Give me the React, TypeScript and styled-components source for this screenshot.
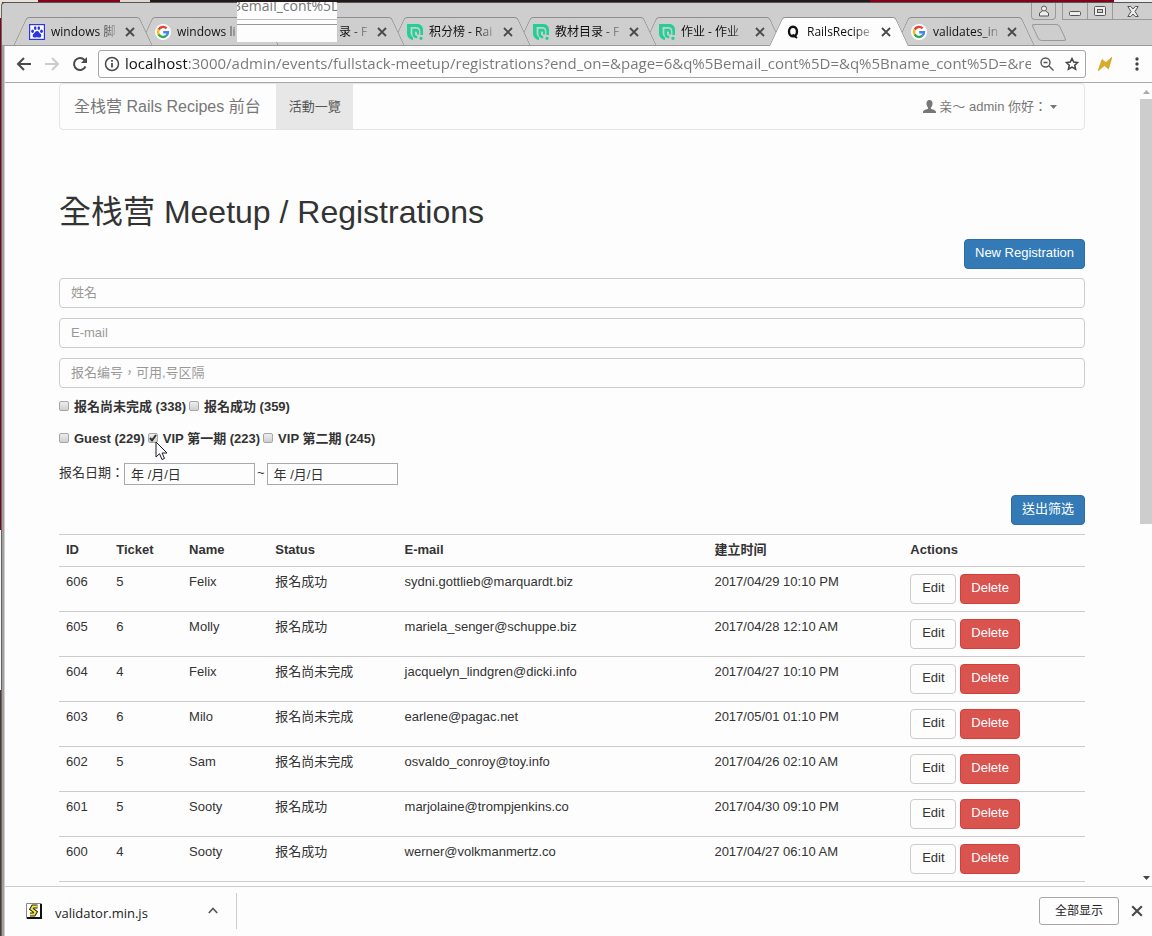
import React from "react";
import styled, { createGlobalStyle, css } from "styled-components";

const pageFont = `"Liberation Sans", "Noto Sans CJK TC", sans-serif`;
const chromeFont = `"Open Sans", "Noto Sans CJK SC", sans-serif`;

const GlobalStyle = createGlobalStyle`
  *, *::before, *::after { box-sizing: border-box; }
  body { margin: 0; background: #85001a; font: 13px/18px ${pageFont}; color: #333; }
  button, input { font: inherit; color: inherit; margin: 0; }
  button { cursor: pointer; }
`;

const Desktop = styled.div`
  height: 100vh;
  padding: 2px 0 0 1px;
  background:
    linear-gradient(90deg, #e8e2da 0 38px, #85001a 38px 120px, #e0d8d0 120px 150px, #221a18 150px 870px, #85001a 870px 1114px, #eee 1114px) top / 100% 2px no-repeat,
    linear-gradient(#e8e2da 0 18px, #85001a 18px 530px, #f4f0ea 530px 690px, #4a3a36 690px) left / 2px 100% no-repeat;
`;

const Window = styled.div`
  position: relative;
  height: 100%;
  display: flex;
  flex-direction: column;
  border-top: 1px solid #555;
  border-left: 1px solid #666;
  border-top-left-radius: 4px;
  background: linear-gradient(90deg, #a0a0a0 2px, #cecece 2px);
`;

const TabStrip = styled.div`
  display: grid;
  height: 43px;
  flex: none;
  padding-left: 11px;
  border-bottom: 1px solid #999;
  border-top-left-radius: 4px;
  background: #cecece;
`;

const Tabs = styled.div`
  grid-area: 1 / 1;
  display: flex;
  align-items: flex-end;
  isolation: isolate;
`;

const TabBox = styled.div<{ $active?: boolean; $order: number }>`
  position: relative;
  z-index: ${(p) => (p.$active ? 20 : p.$order)};
  display: flex;
  align-items: center;
  flex: none;
  width: 140px;
  height: 29px;
  margin: 0 -14px -1px 0;
  padding: 0 15px 0 16px;
  font: 12px/18px ${chromeFont};
  color: #111;

  &::before,
  &::after {
    content: "";
    position: absolute;
    z-index: -1;
    top: 0;
    bottom: 0;
    width: 50%;
    background: ${(p) => (p.$active ? "#fdfdfd" : "#cecece")};
    border: 0 solid #8f8f8f;
    border-top-width: 1px;
    border-bottom: ${(p) => (p.$active ? "0" : "1px solid #999")};
  }
  &::before {
    left: 0;
    border-left-width: 1px;
    border-top-left-radius: 3px;
    transform: skewX(-25deg);
    transform-origin: bottom left;
  }
  &::after {
    right: 0;
    border-right-width: 1px;
    border-top-right-radius: 3px;
    transform: skewX(25deg);
    transform-origin: bottom right;
  }
`;

const TabTitle = styled.span`
  flex: 1;
  min-width: 0;
  overflow: hidden;
  white-space: nowrap;
  margin: 0 4px 0 6px;
  mask-image: linear-gradient(90deg, #000 70%, rgba(0, 0, 0, 0.15) 100%);
`;

const IconButton = styled.button<{ $w?: number }>`
  display: flex;
  align-items: center;
  justify-content: center;
  flex: none;
  width: ${(p) => p.$w ?? 16}px;
  height: 16px;
  padding: 0;
  border: 0;
  background: none;
`;

const NewTab = styled.button`
  flex: none;
  width: 28px;
  height: 17px;
  margin: 0 0 4px 14px;
  padding: 0;
  border: 1px solid #999;
  border-radius: 3px;
  background: #cecece;
  transform: skewX(25deg);
`;

const WindowButtons = styled.div`
  grid-area: 1 / 1;
  justify-self: end;
  display: flex;
  height: 17px;
`;

const WindowButton = styled.button<{ $w: number; $gap?: boolean }>`
  display: flex;
  align-items: center;
  justify-content: center;
  width: ${(p) => p.$w}px;
  padding: 0;
  border: 1px solid #999;
  border-top: 0;
  border-right-width: ${(p) => (p.$gap ? 1 : 0)}px;
  margin-right: ${(p) => (p.$gap ? 6 : 0)}px;
  border-radius: ${(p) => (p.$gap ? "0 0 4px 4px" : "0")};
  background: #cecece;
`;

const chromeSurface = css`
  margin-left: 3px;
  background: #fdfdfd;
`;

const Toolbar = styled.div`
  ${chromeSurface}
  display: flex;
  align-items: center;
  flex: none;
  height: 37px;
  padding: 0 1px 0 5px;
  border-bottom: 1px solid #aaa;
`;

const NavButton = styled(IconButton)`
  width: 28px;
  height: 28px;
`;

const AddressBar = styled.div`
  display: flex;
  align-items: center;
  flex: 1;
  min-width: 0;
  height: 28px;
  margin: 0 5px 0 4px;
  padding: 0 0 0 4px;
  border: 1px solid #a6a6a6;
  border-radius: 3px;
`;

const Extensions = styled.div`
  display: flex;
  gap: 4px;
`;

const AddressInput = styled.input`
  flex: 1;
  min-width: 0;
  height: 24px;
  padding: 0 0 2px;
  margin: 0 4px 0 4px;
  border: 0;
  outline: 0;
  font: 15px/22px ${chromeFont};
  background: linear-gradient(90deg, #111 62px, #777 62px);
  background-clip: text;
  -webkit-text-fill-color: transparent;
`;

const Viewport = styled.div`
  ${chromeSurface}
  display: flex;
  flex: 1;
  min-height: 0;
`;

const Page = styled.div`
  flex: 1;
  min-width: 0;
  overflow: hidden;
  padding: 0 16px;
`;

const Container = styled.main`
  max-width: 1026px;
  margin: 0 auto;
`;

const ScrollBar = styled.div`
  display: flex;
  flex-direction: column;
  align-items: center;
  justify-content: space-between;
  width: 13px;
  padding: 7px 0 6px 1px;
`;

const ScrollThumb = styled.div`
  width: 100%;
  height: 425px;
  margin: 5px 0 auto;
  background: #cdcdcd;
`;

const Navbar = styled.nav`
  display: flex;
  align-items: stretch;
  height: 47px;
  border: 1px solid #e3e3e3;
  border-radius: 4px;
  color: #777;
`;

const Brand = styled.a`
  padding: 14px 15px 14px 14px;
  font-size: 16px;
  line-height: 18px;
  color: inherit;
  text-decoration: none;
`;

const NavItem = styled.a<{ $active?: boolean }>`
  display: flex;
  align-items: center;
  padding: 0 12px 0 13px;
  color: ${(p) => (p.$active ? "#555" : "inherit")};
  background: ${(p) => (p.$active ? "#e7e7e7" : "none")};
  text-decoration: none;
`;

const UserMenu = styled.button`
  display: flex;
  align-items: center;
  gap: 3px;
  margin-left: auto;
  padding: 0 27px 0 0;
  border: 0;
  background: none;
`;

const Heading = styled.h1`
  margin: 64px 0 9px;
  font-size: 32px;
  line-height: 36px;
  font-weight: 400;
`;

const ButtonRow = styled.div`
  display: flex;
  justify-content: flex-end;
  margin-bottom: 9px;
`;

const tones = {
  primary: ["#337ab7", "#2e6da4", "#fff"],
  danger: ["#d9534f", "#d43f3a", "#fff"],
  plain: ["#fdfdfd", "#ccc", "#333"],
};

const Button = styled.button<{ $tone: keyof typeof tones }>`
  min-width: 46px;
  height: 30px;
  padding: 0 10px 2px;
  border: 1px solid ${(p) => tones[p.$tone][1]};
  border-radius: 4px;
  background: ${(p) => tones[p.$tone][0]};
  color: ${(p) => tones[p.$tone][2]};
  line-height: 18px;
`;

const TextField = styled.input`
  display: block;
  width: 100%;
  height: 30px;
  margin-bottom: 10px;
  padding: 0 11px 2px;
  border: 1px solid #ccc;
  border-radius: 4px;
  background: #fdfdfd;
  &::placeholder { color: #999; opacity: 1; }
`;

const CheckRow = styled.div`
  display: flex;
  gap: 3px;
  height: 18px;
  margin-bottom: 14px;
`;

const CheckLabel = styled.label`
  display: flex;
  align-items: center;
  gap: 5px;
  font-weight: 700;
`;

const CheckBox = styled.input.attrs({ type: "checkbox" })`
  appearance: none;
  width: 10px;
  height: 10px;
  margin-bottom: 3px;
  border: 1px solid #a5a5a5;
  border-radius: 2px;
  background: linear-gradient(#eee, #cfcfcf);
  &:checked {
    background:
      url("data:image/svg+xml,%3Csvg xmlns='http://www.w3.org/2000/svg' viewBox='0 0 8 8'%3E%3Cpath d='M1 4l2 2.4L7 1' fill='none' stroke='%23333' stroke-width='2'/%3E%3C/svg%3E"),
      linear-gradient(#eee, #cfcfcf);
  }
`;

const DateRow = styled.div`
  display: flex;
  align-items: center;
  height: 24px;
  margin-bottom: 9px;
`;

const DateLabel = styled.label<{ $gap?: boolean }>`
  padding: 0 ${(p) => (p.$gap ? 2 : 0)}px 2px;
`;

const DateInput = styled.input`
  width: 131px;
  height: 22px;
  padding: 0 6px 2px;
  border: 1px solid #a9a9a9;
  background: #fdfdfd;
`;

const Table = styled.table`
  width: 100%;
  table-layout: fixed;
  border-collapse: collapse;
`;

const HeadCell = styled.th<{ $w: number }>`
  width: ${(p) => p.$w}%;
  height: 32px;
  padding: 0 7px 2px;
  border-top: 1px solid #ccc;
  text-align: left;
`;

const Cell = styled.td`
  height: 45px;
  padding: 6px 7px 0;
  border-top: 1px solid #ccc;
  vertical-align: top;
`;

const Actions = styled.div`
  display: flex;
  gap: 4px;
  padding-top: 1px;
`;

const DownloadBar = styled.footer`
  ${chromeSurface}
  display: flex;
  align-items: center;
  flex: none;
  height: 50px;
  padding: 0 7px 2px 21px;
  border-top: 1px solid #ccc;
  font: 13px/18px ${chromeFont};
  color: #222;
`;

const Download = styled.div`
  display: flex;
  align-items: center;
  width: 211px;
  height: 36px;
  padding-right: 15px;
  border-right: 1px solid #ccc;
`;

const FileName = styled.span`
  flex: 1;
  margin: 4px 0 0 13px;
`;

const ShowAll = styled.button`
  width: 80px;
  height: 28px;
  margin: 0 10px 0 auto;
  padding: 0;
  border: 1px solid #a6a6a6;
  border-radius: 3px;
  background: #fdfdfd;
  font-size: 12px;
`;

const DragGhost = styled.div`
  position: absolute;
  z-index: 30;
  top: -1px;
  left: 235px;
  width: 100px;
  height: 40px;
  overflow: hidden;
  background: #fdfdfd;
  color: #777;
  font: 14px/18px ${chromeFont};
`;

const GhostText = styled.div`
  display: flex;
  align-items: flex-end;
  height: 17px;
  margin-left: -4px;
  padding-bottom: 4px;
  white-space: nowrap;
`;

const GhostLines = styled.div`
  height: 6px;
  border-top: 1px solid #bbb;
  border-bottom: 1px solid #999;
`;

const Pointer = styled.svg`
  position: absolute;
  z-index: 30;
  top: 438px;
  left: 153px;
`;

const Cross = ({ size = 10 }: { size?: number }) => (
  <svg width={size} height={size} viewBox="0 0 10 10" aria-hidden="true">
    <path d="M1 1l8 8M9 1L1 9" stroke="#4a4a4a" strokeWidth="1.8" />
  </svg>
);

const BaiduIcon = () => (
  <svg width="16" height="16" viewBox="0 0 16 16" aria-hidden="true">
    <rect x=".6" y=".6" width="14.8" height="14.8" fill="#fff" stroke="#2a36e0" strokeWidth="1.2" />
    <g fill="#2a36e0">
      <ellipse cx="3.6" cy="7.2" rx="1.4" ry="1.8" />
      <ellipse cx="6.2" cy="4.1" rx="1.3" ry="1.9" />
      <ellipse cx="9.8" cy="4.1" rx="1.3" ry="1.9" />
      <ellipse cx="12.5" cy="7.2" rx="1.4" ry="1.8" />
      <path d="M8 7c1.700 0 2.200 1.700 3.400 2.800 1.700 1.600.9 3.800-1 3.800-1 0-1.400-.4-2.400-.4s-1.400.4-2.400.4c-1.900 0-2.700-2.200-1-3.800C5.800 8.700 6.300 7 8 7z" />
    </g>
  </svg>
);

const GoogleIcon = () => (
  <svg width="16" height="16" viewBox="0 0 16 16" aria-hidden="true">
    <circle cx="8" cy="8" r="8" fill="#fff" />
    <g fill="none" strokeWidth="2.400">
      <path d="M11.600 4.400A5 5 0 0 0 3.600 5.600" stroke="#ea4335" />
      <path d="M3.600 5.600a5 5 0 0 0 0 4.800" stroke="#fbbc05" />
      <path d="M3.600 10.400a5 5 0 0 0 7.700 1.300" stroke="#34a853" />
      <path d="M11.300 11.700A5 5 0 0 0 13 8.200H8.200" stroke="#4285f4" />
    </g>
  </svg>
);

const CourseIcon = () => (
  <svg width="16" height="16" viewBox="0 0 16 16" aria-hidden="true">
    <g fill="#22cf94">
      <path d="M0 0h10c4 0 6 2.500 6 6.500V11h-2.600V7.500c0-3.200-1.600-4.600-4.600-4.600H3.600v5.600c0 2.600 1 4 2.400 4.700V16C2.500 15.400 0 13 0 9z" />
      <path d="M5.400 4.800h3.800c2 0 2.900 1 2.900 3V10.500H10V8.600c0-.8-.3-1.100-1-1.100H8v2c0 1.500.7 2.300 2.200 2.500V14.400C7 14.200 5.400 12.500 5.400 9.800z" />
      <circle cx="14" cy="14.300" r="1.600" />
    </g>
  </svg>
);

const QIcon = () => (
  <svg width="16" height="16" viewBox="0 0 16 16" aria-hidden="true">
    <ellipse cx="8" cy="7.500" rx="4" ry="4.800" fill="none" stroke="#111" strokeWidth="2.400" />
    <path d="M7.500 10.500l4.500 3.500" stroke="#111" strokeWidth="2" />
  </svg>
);

const tabs = [
  { title: "windows 脚", icon: <BaiduIcon /> },
  { title: "windows li", icon: <GoogleIcon /> },
  { title: "教材目录 - F", icon: <CourseIcon /> },
  { title: "积分榜 - Rai", icon: <CourseIcon /> },
  { title: "教材目录 - F", icon: <CourseIcon /> },
  { title: "作业 - 作业", icon: <CourseIcon /> },
  { title: "RailsRecipe", icon: <QIcon />, active: true },
  { title: "validates_in", icon: <GoogleIcon /> },
];

const columns: [string, number][] = [
  ["ID", 4.9],
  ["Ticket", 7.1],
  ["Name", 8.4],
  ["Status", 12.6],
  ["E-mail", 30.2],
  ["建立时间", 19.1],
  ["Actions", 17.7],
];

const rows = [
  ["606", "5", "Felix", "报名成功", "sydni.gottlieb@marquardt.biz", "2017/04/29 10:10 PM"],
  ["605", "6", "Molly", "报名成功", "mariela_senger@schuppe.biz", "2017/04/28 12:10 AM"],
  ["604", "4", "Felix", "报名尚未完成", "jacquelyn_lindgren@dicki.info", "2017/04/27 10:10 PM"],
  ["603", "6", "Milo", "报名尚未完成", "earlene@pagac.net", "2017/05/01 01:10 PM"],
  ["602", "5", "Sam", "报名尚未完成", "osvaldo_conroy@toy.info", "2017/04/26 02:10 AM"],
  ["601", "5", "Sooty", "报名成功", "marjolaine@trompjenkins.co", "2017/04/30 09:10 PM"],
  ["600", "4", "Sooty", "报名成功", "werner@volkmanmertz.co", "2017/04/27 06:10 AM"],
];

const Check = ({ label, checked }: { label: string; checked?: boolean }) => (
  <CheckLabel>
    <CheckBox defaultChecked={checked} />
    {label}
  </CheckLabel>
);

const BrowserTabs = () => (
  <TabStrip>
    <Tabs>
      {tabs.map((tab, i) => (
        <TabBox key={i} $active={tab.active} $order={tabs.length - i}>
          {tab.icon}
          <TabTitle>{tab.title}</TabTitle>
          <IconButton aria-label="Close tab">
            <Cross />
          </IconButton>
        </TabBox>
      ))}
      <NewTab aria-label="New tab" />
    </Tabs>
    <WindowButtons>
      <WindowButton $w={25} $gap aria-label="Profile">
        <svg width="12" height="12" viewBox="0 0 12 12" fill="#eee" stroke="#555">
          <path d="M4.500 6L1.500 8v3h9V8L7.500 6" />
          <circle cx="6" cy="3.500" r="2.500" />
        </svg>
      </WindowButton>
      <WindowButton $w={25} aria-label="Minimize">
        <svg width="14" height="12" viewBox="0 0 14 12">
          <rect x="1.500" y="6.500" width="11" height="4" rx="1" fill="#eee" stroke="#555" />
        </svg>
      </WindowButton>
      <WindowButton $w={25} aria-label="Maximize">
        <svg width="12" height="10" viewBox="0 0 12 10" fill="#eee" stroke="#555">
          <rect x=".5" y=".5" width="11" height="9" rx="1" />
          <rect x="3.500" y="3.500" width="5" height="3" fill="#cecece" />
        </svg>
      </WindowButton>
      <WindowButton $w={40} aria-label="Close window">
        <svg width="12" height="11" viewBox="0 0 12 11">
          <path d="M.8.5h3L6 3l2.200-2.500h3L8 5.500l3.200 5h-3L6 8l-2.200 2.500h-3L4 5.500z" fill="#eee" stroke="#555" />
        </svg>
      </WindowButton>
    </WindowButtons>
  </TabStrip>
);

const BrowserToolbar = () => (
  <Toolbar>
    <NavButton aria-label="Back">
      <svg width="16" height="14" viewBox="0 0 16 14" fill="none" stroke="#4a4a4a" strokeWidth="2">
        <path d="M15 7H2M8 1L2 7l6 6" />
      </svg>
    </NavButton>
    <NavButton aria-label="Forward">
      <svg width="16" height="14" viewBox="0 0 16 14" fill="none" stroke="#ccc" strokeWidth="2">
        <path d="M1 7h13M8 1l6 6-6 6" />
      </svg>
    </NavButton>
    <NavButton aria-label="Reload">
      <svg width="16" height="16" viewBox="0 0 16 16" fill="none" stroke="#4a4a4a" strokeWidth="2">
        <path d="M13.500 10.500A6 6 0 1 1 12.500 4L14 5.500" />
        <path d="M15 1v6H9z" fill="#4a4a4a" stroke="none" />
      </svg>
    </NavButton>
    <AddressBar>
      <svg width="18" height="16" viewBox="0 0 18 16" fill="none" stroke="#4a4a4a" strokeWidth="1.500">
        <circle cx="9" cy="8" r="6.500" />
        <path d="M9 7v4.500M9 4v1.800" strokeWidth="1.800" />
      </svg>
      <AddressInput
        aria-label="Address"
        defaultValue="localhost:3000/admin/events/fullstack-meetup/registrations?end_on=&page=6&q%5Bemail_cont%5D=&q%5Bname_cont%5D=&regis"
      />
      <IconButton $w={24} aria-label="Zoom">
        <svg width="14" height="14" viewBox="0 0 14 14" fill="none" stroke="#555" strokeWidth="1.400">
          <circle cx="5.500" cy="5.500" r="4.500" />
          <path d="M9 9l4.500 4.500M3.500 5.500h4" />
        </svg>
      </IconButton>
      <IconButton $w={26} aria-label="Bookmark">
        <svg width="14" height="14" viewBox="0 0 14 14" fill="none" stroke="#444" strokeWidth="1.500">
          <path d="M7 1.500l1.700 3.600 4 .4-3 2.700.9 4L7 10.200l-3.600 2 .9-4-3-2.700 4-.4z" />
        </svg>
      </IconButton>
    </AddressBar>
    <Extensions>
      <NavButton aria-label="Extension">
        <svg width="14" height="14" viewBox="0 0 14 14">
          <path d="M0 14L4 2.500 8 5.500 14 0 10.500 12 6.500 8.500z" fill="#dcae1e" stroke="#b98a20" strokeWidth=".5" />
        </svg>
      </NavButton>
      <NavButton aria-label="Menu">
        <svg width="4" height="14" viewBox="0 0 4 14" fill="#444">
          <circle cx="2" cy="2" r="1.700" />
          <circle cx="2" cy="7" r="1.700" />
          <circle cx="2" cy="12" r="1.700" />
        </svg>
      </NavButton>
    </Extensions>
  </Toolbar>
);

const RegistrationTable = () => (
  <Table>
    <thead>
      <tr>
        {columns.map(([name, width]) => (
          <HeadCell key={name} $w={width}>{name}</HeadCell>
        ))}
      </tr>
    </thead>
    <tbody>
      {rows.map((row) => (
        <tr key={row[0]}>
          {row.map((value, i) => (
            <Cell key={i}>{value}</Cell>
          ))}
          <Cell>
            <Actions>
              <Button $tone="plain">Edit</Button>
              <Button $tone="danger">Delete</Button>
            </Actions>
          </Cell>
        </tr>
      ))}
      <tr>
        <Cell colSpan={7} />
      </tr>
    </tbody>
  </Table>
);

export default function App() {
  return (
    <>
      <GlobalStyle />
      <Desktop>
        <Window>
          <BrowserTabs />
          <BrowserToolbar />
          <Viewport>
            <Page>
              <Container>
                <Navbar>
                  <Brand href="#">全栈营 Rails Recipes 前台</Brand>
                  <NavItem href="#" $active>活動一覽</NavItem>
                  <UserMenu>
                    <svg width="13" height="13" viewBox="0 0 13 13" fill="#777" aria-hidden="true">
                      <path d="M6.500 0C8.600 0 9.500 1.500 9.500 3.500S8.600 7 8 7.500v1.300c1 .7 5 1.200 5 3.200v1H0v-1c0-2 4-2.500 5-3.200V7.500C4.400 7 3.500 5.500 3.500 3.500S4.400 0 6.500 0z" />
                    </svg>
                    <span>亲～ admin 你好：</span>
                    <svg width="7" height="4" viewBox="0 0 7 4" fill="#777" aria-hidden="true">
                      <path d="M0 0h7L3.500 4z" />
                    </svg>
                  </UserMenu>
                </Navbar>
                <Heading>全栈营 Meetup / Registrations</Heading>
                <ButtonRow>
                  <Button $tone="primary">New Registration</Button>
                </ButtonRow>
                <TextField placeholder="姓名" aria-label="姓名" />
                <TextField placeholder="E-mail" aria-label="E-mail" />
                <TextField placeholder="报名编号，可用,号区隔" aria-label="报名编号" />
                <CheckRow>
                  <Check label="报名尚未完成 (338)" />
                  <Check label="报名成功 (359)" />
                </CheckRow>
                <CheckRow>
                  <Check label="Guest (229)" />
                  <Check label="VIP 第一期 (223)" checked />
                  <Check label="VIP 第二期 (245)" />
                </CheckRow>
                <DateRow>
                  <DateLabel htmlFor="start">报名日期：</DateLabel>
                  <DateInput id="start" defaultValue="年 /月/日" />
                  <DateLabel htmlFor="end" $gap>~</DateLabel>
                  <DateInput id="end" defaultValue="年 /月/日" />
                </DateRow>
                <ButtonRow>
                  <Button $tone="primary">送出筛选</Button>
                </ButtonRow>
                <RegistrationTable />
              </Container>
            </Page>
            <ScrollBar>
              <svg width="7" height="4" viewBox="0 0 7 4" fill="#aaa"><path d="M0 4h7L3.500 0z" /></svg>
              <ScrollThumb />
              <svg width="7" height="4" viewBox="0 0 7 4" fill="#444"><path d="M0 0h7L3.500 4z" /></svg>
            </ScrollBar>
          </Viewport>
          <DownloadBar>
            <Download>
              <svg width="16" height="16" viewBox="0 0 16 16" aria-hidden="true">
                <path d="M.5 15.500V.5h15" fill="none" stroke="#888" />
                <path d="M15 1v14H1" fill="none" stroke="#111" strokeWidth="2" />
                <path d="M11.500 3.500H7L5.500 6l4 3L8 11.500H4" fill="none" stroke="#222" strokeWidth="4" />
                <path d="M11.500 3.500H7L5.500 6l4 3L8 11.500H4" fill="none" stroke="#f3e62c" strokeWidth="2" />
              </svg>
              <FileName>validator.min.js</FileName>
              <IconButton aria-label="Download options">
                <svg width="10" height="7" viewBox="0 0 10 7" fill="none" stroke="#555" strokeWidth="1.600">
                  <path d="M.8 6L5 1.500 9.200 6" />
                </svg>
              </IconButton>
            </Download>
            <ShowAll>全部显示</ShowAll>
            <IconButton aria-label="Close downloads">
              <Cross size={12} />
            </IconButton>
          </DownloadBar>
          <DragGhost>
            <GhostText>3email_cont%5D</GhostText>
            <GhostLines />
          </DragGhost>
          <Pointer width="14" height="20" viewBox="0 0 14 20" aria-hidden="true">
            <path d="M1 1v15l3.500-3.300L7 18.500l2.500-1-2.400-5.500H12z" fill="#fdfdfd" stroke="#1a1a2a" />
          </Pointer>
        </Window>
      </Desktop>
    </>
  );
}
